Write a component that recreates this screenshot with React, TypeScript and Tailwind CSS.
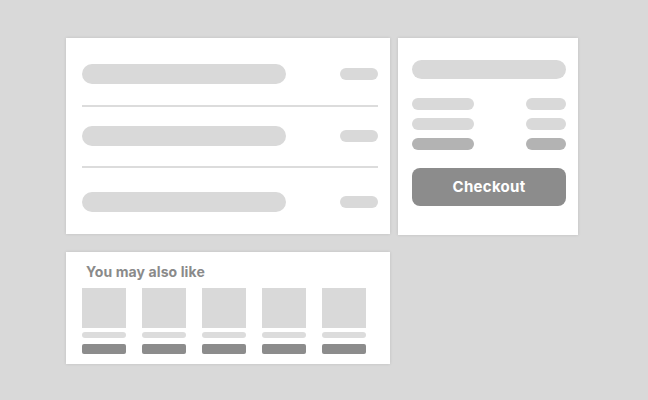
import React from "react";

const Bar = ({ w, h, c }: { w: string; h: string; c: string }) => (
  <div className={`${w} ${h} ${c} rounded-full`} />
);

export default function App() {
  const rows = [0, 1, 2];
  const items = [0, 1, 2, 3, 4];
  return (
    <div className="w-[648px] h-[400px] bg-[#d9d9d9] pt-[38px] pl-[66px] font-['Inter',sans-serif]">
      <div className="flex gap-[8px] items-start">
        {/* cart items */}
        <div className="w-[324px] h-[196px] bg-white shadow-[0_0_3px_rgba(0,0,0,0.12)] pl-[16px] pr-[12px] pt-[26px]">
          <div className="flex items-center justify-between h-[20px]">
            <div className="w-[204px] h-[20px] rounded-full bg-[#d9d9d9]" />
            <div className="w-[38px] h-[12px] rounded-full bg-[#d9d9d9]" />
          </div>
          <div className="mt-[21px] h-[2px] bg-[#dcdcdc]" />
          <div className="mt-[19px] flex items-center justify-between h-[20px]">
            <div className="w-[204px] h-[20px] rounded-full bg-[#d9d9d9]" />
            <div className="w-[38px] h-[12px] rounded-full bg-[#d9d9d9]" />
          </div>
          <div className="mt-[20px] h-[2px] bg-[#dcdcdc]" />
          <div className="mt-[24px] flex items-center justify-between h-[20px]">
            <div className="w-[204px] h-[20px] rounded-full bg-[#d9d9d9]" />
            <div className="w-[38px] h-[12px] rounded-full bg-[#d9d9d9]" />
          </div>
        </div>
        {/* summary */}
        <div className="w-[180px] h-[197px] bg-white shadow-[0_0_3px_rgba(0,0,0,0.12)] pl-[14px] pr-[12px] pt-[22px]">
          <div className="h-[19px] rounded-full bg-[#d9d9d9]" />
          <div className="mt-[19px] flex flex-col gap-[8px]">
            {rows.map((r) => (
              <div key={r} className="flex justify-between">
                <Bar w="w-[62px]" h="h-[12px]" c={r === 2 ? "bg-[#b3b3b3]" : "bg-[#d9d9d9]"} />
                <Bar w="w-[40px]" h="h-[12px]" c={r === 2 ? "bg-[#b3b3b3]" : "bg-[#d9d9d9]"} />
              </div>
            ))}
          </div>
          <div className="mt-[18px] h-[38px] rounded-[8px] bg-[#8c8c8c] flex items-center justify-center text-white text-[15px] font-bold tracking-[0.3px]">
            Checkout
          </div>
        </div>
      </div>
      {/* recommendations */}
      <div className="mt-[17px] w-[324px] h-[112px] bg-white shadow-[0_0_3px_rgba(0,0,0,0.12)] pl-[16px] pt-[10px]">
        <div className="pl-[4px] text-[14px] leading-[20px] font-bold text-[#8a8a8a] tracking-[0.1px]">You may also like</div>
        <div className="mt-[6px] flex gap-[16px]">
          {items.map((i) => (
            <div key={i} className="w-[44px] flex flex-col">
              <div className="h-[40px] bg-[#d9d9d9]" />
              <div className="mt-[4px] h-[6px] rounded-full bg-[#dcdcdc]" />
              <div className="mt-[6px] h-[10px] rounded-[2px] bg-[#8c8c8c]" />
            </div>
          ))}
        </div>
      </div>
    </div>
  );
}
